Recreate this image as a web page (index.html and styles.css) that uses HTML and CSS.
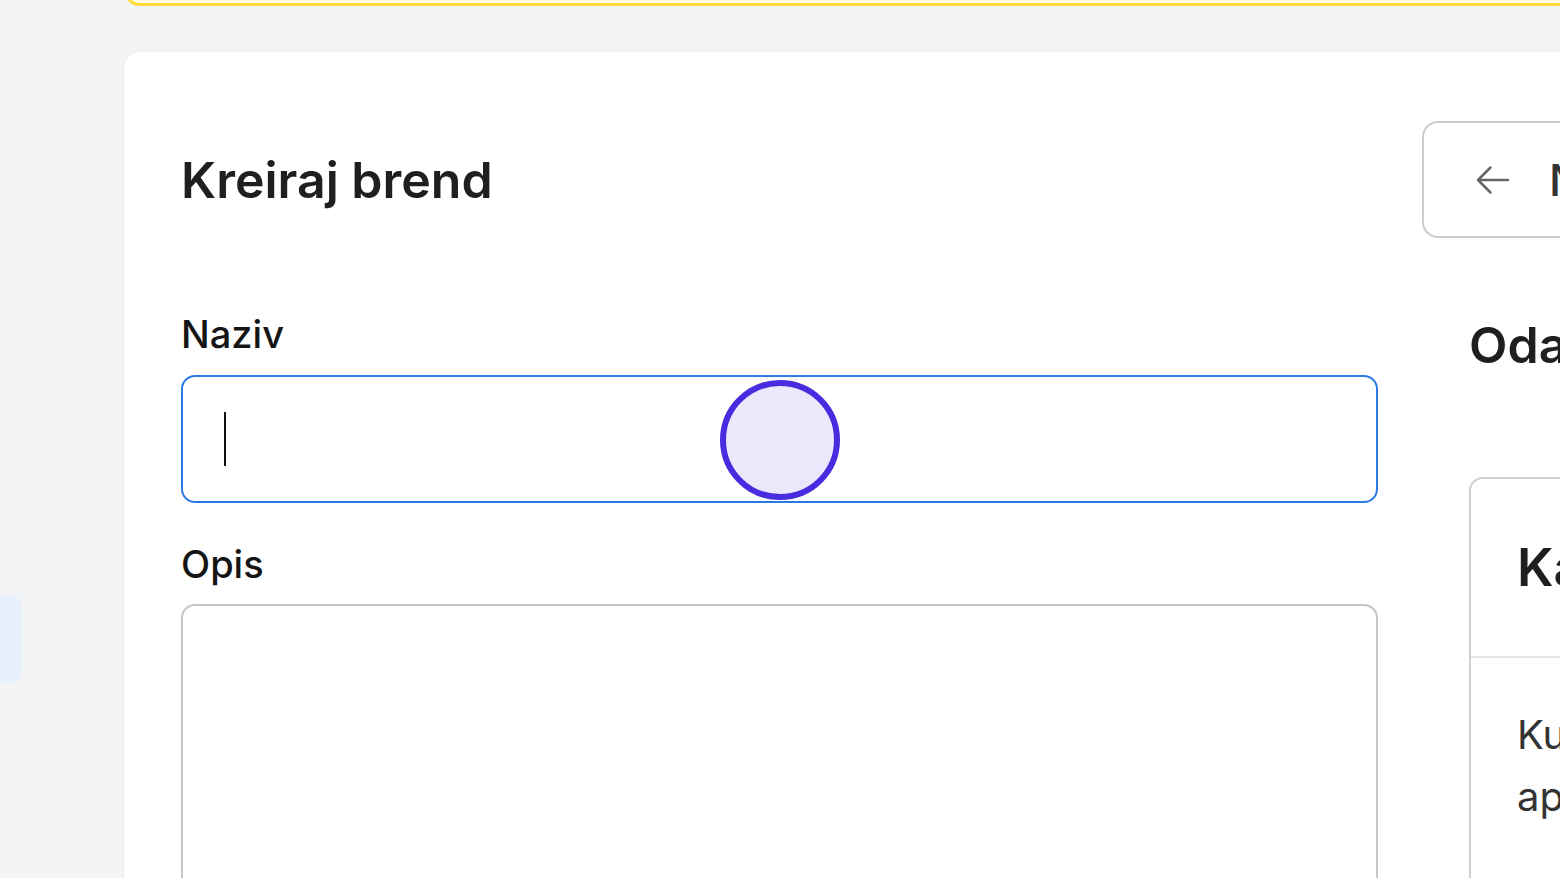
FILE: index.html
```html
<!DOCTYPE html>
<html>
  <head>
    <meta charset="utf-8">
    <meta name="viewport" content="width=device-width, initial-scale=1">
    <link rel="stylesheet" href="styles.css">
    <title>Kreiraj brend</title>
  </head>
  <body>
    <aside class="sidebar">
      <div class="nav-item active"></div>
    </aside>
    <main class="main">
      <div class="notice"></div>
      <section class="card">
        <header class="card-head">
          <h1 class="title">Kreiraj brend</h1>
          <button class="back-btn" type="button">
            <svg class="back-icon" viewBox="0 0 24 24" fill="none" stroke="currentColor" stroke-width="1.5" stroke-linecap="round" stroke-linejoin="round"><path d="M10.5 19.5 3 12m0 0 7.5-7.5M3 12h18"/></svg>
            <span>Nazad na listu</span>
          </button>
        </header>
        <div class="layout">
          <form class="form" onsubmit="return false;">
            <label class="label">Naziv</label>
            <div class="field focused">
              <span class="caret"></span>
              <span class="click-dot"></span>
            </div>
            <label class="label">Opis</label>
            <div class="field area"></div>
          </form>
          <div class="side">
            <h2 class="side-title">Odaberite kategoriju</h2>
            <div class="panel">
              <div class="panel-head">Kategorije</div>
              <div class="panel-body">Kupci će vidjeti brend u<br>aplikaciji po kategoriji.</div>
            </div>
          </div>
        </div>
      </section>
    </main>
  </body>
</html>
```

FILE: styles.css
```css
html, body {
    margin: 0; height: 100%;
    overflow: hidden;
}
body {
    display: flex;
    background: #f3f4f6;
    font-family: Inter, 'Noto Sans', sans-serif;
    color: #222;
}

.sidebar {
    width: 124px; flex-shrink: 0;
    display: flex; flex-direction: column;
}
.nav-item {
    margin-top: 595px; width: 22px; height: 88px;
    border-radius: 0 12px 12px 0;
}
.nav-item.active { background: #e7effd; }

.main {
    flex: 1; min-width: 0;
    display: flex; flex-direction: column;
}
.notice {
    flex-shrink: 0;
    height: 60px; margin-top: -54px; margin-left: 1px;
    box-sizing: border-box;
    background: #fffbe3;
    border: 3px solid #fcdc3c; border-right: 0;
    border-radius: 0 0 0 14px;
}

.card {
    flex-shrink: 0;
    margin-top: 46px; width: 2100px;
    background: #fff;
    border-radius: 16px 0 0 0;
    box-shadow: 0 1px 4px rgba(0,0,0,0.06);
    padding: 69px 57px 0 57px;
    box-sizing: border-box;
    min-height: 900px;
}
.card-head {
    display: flex; align-items: center;
}
.title {
    margin: 0; font-size: 50px; font-weight: 600;
    line-height: 1.2; color: #1f1f1f;
}
.back-btn {
    margin-left: auto;
    display: flex; align-items: center; gap: 36px;
    width: 745px; height: 117px; box-sizing: border-box;
    padding: 0 49px;
    background: #fff; border: 2px solid #cbcbcb; border-radius: 16px;
    font-family: inherit; font-size: 44px; font-weight: 500; color: #333;
}
.back-icon { width: 40px; height: 40px; color: #666; flex-shrink: 0; }

.layout {
    display: grid; grid-template-columns: 1197px 1fr; column-gap: 91px;
    margin-top: 74px;
}
.form { display: flex; flex-direction: column; }
.label {
    font-size: 38px; font-weight: 500; line-height: 1.2;
    color: #151515; margin-bottom: 17px;
}
.field {
    position: relative;
    height: 128px; box-sizing: border-box;
    border: 2px solid #c6c6c6; border-radius: 14px;
    display: flex; align-items: center; padding-left: 41px;
    margin-bottom: 39px;
}
.field.focused { border-color: #2c7be5; }
.field.area { height: 330px; }
.caret {
    width: 2px; height: 54px; background: #111;
}
.click-dot {
    position: absolute; left: 537px; top: 3px;
    width: 108px; height: 108px;
    border: 6px solid #4a2ce0; border-radius: 50%;
    background: #ebe8fc;
}

.side-title {
    margin: 0; padding-top: 3px;
    font-size: 50px; font-weight: 600;
    line-height: 1.2; color: #1f1f1f; white-space: nowrap;
}
.panel {
    margin-top: 102px;
    border: 2px solid #cfcfcf; border-radius: 14px;
}
.panel-head {
    height: 177px; display: flex; align-items: center;
    padding-left: 46px;
    font-size: 52px; font-weight: 600; color: #1f1f1f;
    border-bottom: 2px solid #e6e6e6;
}
.panel-body {
    padding: 46px 46px 160px;
    font-size: 40px; line-height: 62px; color: #333;
}
```
